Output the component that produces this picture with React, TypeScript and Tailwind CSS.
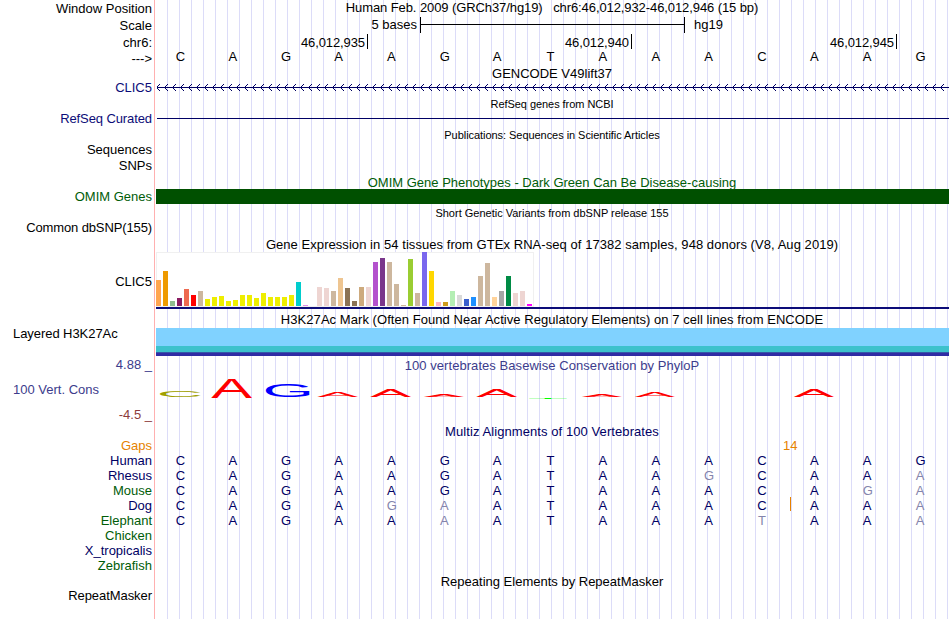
import React from "react";

type Label = { text: string; cls: string };

const INK = "text-black";
const NAVY = "text-[#0c0c78]";
const DEEP = "text-[#000064]";
const GREEN = "text-[#005c08]";
const SLATE = "text-[#3c3c8c]";

const labels: Label[] = [
  { text: "Window Position", cls: `mt-px ${INK}` },
  { text: "Scale", cls: `mt-[2px] ${INK}` },
  { text: "chr6:", cls: `mt-[2px] ${INK}` },
  { text: "--->", cls: `mt-px ${INK}` },
  { text: "CLIC5", cls: `mt-[14px] ${NAVY}` },
  { text: "RefSeq Curated", cls: `mt-[16px] tracking-[-0.1px] ${NAVY}` },
  { text: "Sequences", cls: `mt-[16px] ${INK}` },
  { text: "SNPs", cls: `mt-px ${INK}` },
  { text: "OMIM Genes", cls: `mt-[16px] ${GREEN}` },
  { text: "Common dbSNP(155)", cls: `mt-[16px] tracking-[-0.12px] ${INK}` },
  { text: "CLIC5", cls: `mt-[39px] ${INK}` },
  { text: "Layered H3K27Ac", cls: `mt-[37px] self-start ml-[13px] tracking-[-0.06px] ${INK}` },
  { text: "4.88 _", cls: `mt-[16px] ${SLATE}` },
  { text: "100 Vert. Cons", cls: `mt-[10px] self-start ml-[13px] ${SLATE}` },
  { text: "-4.5 _", cls: "mt-[10px] text-[#8c3c3c]" },
  { text: "Gaps", cls: "mt-[16px] text-[#e68200]" },
  { text: "Human", cls: DEEP },
  { text: "Rhesus", cls: DEEP },
  { text: "Mouse", cls: GREEN },
  { text: "Dog", cls: DEEP },
  { text: "Elephant", cls: GREEN },
  { text: "Chicken", cls: GREEN },
  { text: "X_tropicalis", cls: DEEP },
  { text: "Zebrafish", cls: GREEN },
  { text: "RepeatMasker", cls: `mt-[15px] tracking-[-0.06px] ${INK}` },
];

// Tissue bars: [colour, height in px]
const tissues: [string, number][] = [
  ["#ffa54f", 26], ["#ee9a00", 35], ["#8fbc8f", 5], ["#8b1c62", 8], ["#ee6a50", 17], ["#ff0000", 11],
  ["#cdb79e", 15], ["#eeee00", 7], ["#eeee00", 9], ["#eeee00", 10], ["#eeee00", 5], ["#eeee00", 6],
  ["#eeee00", 11], ["#eeee00", 11], ["#eeee00", 8], ["#eeee00", 13], ["#eeee00", 9], ["#eeee00", 9],
  ["#eeee00", 9], ["#eeee00", 11], ["#00cdcd", 24], ["#e090e8", 1], ["#ffffff", 0], ["#eed5d2", 19],
  ["#eed5d2", 18], ["#cdb79e", 15], ["#eec591", 28], ["#8b7355", 18], ["#8b7355", 5], ["#cdaa7d", 19],
  ["#eed5d2", 19], ["#b452cd", 44], ["#7a378b", 48], ["#cdb79e", 44], ["#cdb79e", 22], ["#cdb79e", 1],
  ["#9acd32", 47], ["#cdb79e", 13], ["#7a67ee", 54], ["#ffd700", 35], ["#ffb6c1", 4], ["#cd9b1d", 4],
  ["#b4eeb4", 15], ["#d9d9d9", 11], ["#3a5fcd", 7], ["#1e90ff", 9], ["#cdb79e", 30], ["#cdb79e", 43],
  ["#ffd39b", 9], ["#a6a6a6", 15], ["#008b45", 30], ["#eed5d2", 13], ["#eed5d2", 15], ["#ff00ff", 2],
];

// Glyph ink boxes per 100px of font size: [left, right, cap height]
const ink: Record<string, [number, number, number]> = {
  A: [0.3, 66.4, 68.8],
  C: [5, 68, 70],
  G: [5, 71, 70],
  T: [2, 59, 68.8],
};

// Conservation letters: letter, colour, left, right, top, bottom within the track
const logo: [string, string, number, number, number, number][] = [
  ["C", "#a0a000", 160, 200.5, 18, 23.8],
  ["A", "#ff0000", 211.5, 252, 6, 25],
  ["G", "#0000ff", 265.7, 309.5, 11, 23.7],
  ["A", "#ff0000", 317.5, 358, 19, 24],
  ["A", "#ff0000", 370.5, 411, 16, 24],
  ["A", "#ff0000", 424, 464, 21.3, 24],
  ["A", "#ff0000", 476.5, 517, 16, 24],
  ["T", "#00ff00", 529, 567, 25, 26],
  ["A", "#ff0000", 582, 622, 22.1, 24],
  ["A", "#ff0000", 635, 675, 19, 24],
  ["A", "#ff0000", 794, 834, 17, 24],
];

const alignments: { seq: string; faded: number[] }[] = [
  { seq: "CAGAAGATAAACAAG", faded: [] },
  { seq: "CAGAAGATAAGCAAA", faded: [10, 14] },
  { seq: "CAGAAGATAAACAGA", faded: [13, 14] },
  { seq: "CAGAGAATAAACAAA", faded: [4, 5, 14] },
  { seq: "CAGAAAATAAATAAA", faded: [5, 11, 14] },
];

function Bases({ seq, faded = [] }: { seq: string; faded?: number[] }) {
  return (
    <div className="-ml-px grid h-[15px] w-[793px] grid-cols-[repeat(15,minmax(0,1fr))]">
      {seq.split("").map((b, i) => (
        <span
          key={i}
          className={`text-center ${b === "A" ? "pr-px" : ""} ${faded.includes(i) ? "text-[#8484ac]" : ""}`}
        >
          {b}
        </span>
      ))}
    </div>
  );
}

function Title({ children, className = "" }: { children: React.ReactNode; className?: string }) {
  return <div className={`-ml-px h-[15px] w-[796px] text-center whitespace-pre ${className}`}>{children}</div>;
}

// Thin line with 7px-tall chevrons pointing to the reverse strand
function Strand() {
  return (
    <svg className="block" width="794" height="9" shapeRendering="crispEdges">
      <path d="M2 4.5H794" stroke="#000064" />
      {Array.from({ length: 99 }, (_, i) => (
        <path
          key={i}
          d={[1, 2, 3].map((k) => `M${1 + i * 8 + k} ${4.5 - k}h1M${1 + i * 8 + k} ${4.5 + k}h1`).join("")}
          stroke="#000064"
        />
      ))}
    </svg>
  );
}

export default function App() {
  return (
    <div className="flex h-[619px] w-[950px] overflow-hidden bg-white font-['Liberation_Sans',Arial,sans-serif] text-[13px] leading-[15px] text-black">
      <div className="flex w-[154px] shrink-0 flex-col items-end pr-[2px] whitespace-pre">
        {labels.map((l, i) => (
          <div key={i} className={`h-[15px] ${l.cls}`}>
            {l.text}
          </div>
        ))}
      </div>
      <div className="w-px shrink-0 bg-[#ffb0b0]" />
      <div className="w-[794px] shrink-0 overflow-hidden [background:linear-gradient(#fff,#fff)_0_0/1px_100%_no-repeat,linear-gradient(90deg,#dcdcf8_1px,transparent_1px)_0_0/12px_100%]">
        <Title className="tracking-[-0.09px]">Human Feb. 2009 (GRCh37/hg19)   chr6:46,012,932-46,012,946 (15 bp)</Title>
        <div className="mt-[2px] flex h-[16px]">
          <span className="w-[262px] text-right">5 bases</span>
          <span className="ml-[3px] flex w-[265px] items-center border-x border-black">
            <span className="-mt-px h-px w-full bg-black" />
          </span>
          <span className="ml-[9px]">hg19</span>
        </div>
        <div className="mt-px flex h-[15px] tracking-[-0.1px]">
          {["46,012,935", "46,012,940", "46,012,945"].map((t, i) => (
            <span
              key={t}
              className={`border-r border-black pt-px pr-[2px] text-right ${i === 0 ? "w-[213px]" : i === 1 ? "w-[264px]" : "w-[265px]"}`}
            >
              {t}
            </span>
          ))}
        </div>
        <Bases seq="CAGAAGATAAACAAG" />
        <Title className="mt-[2px]">GENCODE V49lift37</Title>
        <div className="mt-[2px]">
          <Strand />
        </div>
        <Title className="mt-[5px] text-[11px] tracking-[-0.05px]">RefSeq genes from NCBI</Title>
        <div className="mt-[6px] ml-[2px] h-px bg-[#000064]" />
        <Title className="mt-[9px] text-[11px] tracking-[-0.05px]">Publications: Sequences in Scientific Articles</Title>
        <Title className="mt-[32px] text-[#005c08]">OMIM Gene Phenotypes - Dark Green Can Be Disease-causing</Title>
        <div className="-mt-px ml-px h-[15px] bg-[#005000]" />
        <Title className="mt-[2px] text-[11px]">Short Genetic Variants from dbSNP release 155</Title>
        <Title className="mt-[16px] tracking-[0.055px]">
          Gene Expression in 54 tissues from GTEx RNA-seq of 17382 samples, 948 donors (V8, Aug 2019)
        </Title>
        <div className="ml-px flex h-[55px] w-[378px] items-end gap-[2px] bg-white pb-px shadow-[inset_0_0_0_1px_#f0f0f0]">
          {tissues.map(([color, h], i) => (
            <span key={i} className="w-[5px] shrink-0" style={{ background: color, height: h }} />
          ))}
        </div>
        <div className="ml-px h-[2px] bg-[#0c0c78]" />
        <Title className="mt-[3px] tracking-[0.055px]">
          H3K27Ac Mark (Often Found Near Active Regulatory Elements) on 7 cell lines from ENCODE
        </Title>
        <div className="mt-px ml-px h-[18px] bg-[#80d2ff]" />
        <div className="ml-px h-[6px] bg-[#3cc2cc]" />
        <div className="ml-px h-px bg-[#3458a8]" />
        <div className="ml-px h-[3px] bg-[#302ca4]" />
        <Title className="mt-[2px] tracking-[0.055px] text-[#3c3c8c]">100 vertebrates Basewise Conservation by PhyloP</Title>
        <svg className="block" width="794" height="51" viewBox="155 0 794 51">
          {logo.map(([ch, fill, l, r, t, b], i) => {
            const [il, ir, cap] = ink[ch];
            const sx = (r - l) / (ir - il);
            const sy = (b - t) / cap;
            return (
              <text key={i} transform={`translate(${l - il * sx} ${b}) scale(${sx} ${sy})`} fontSize="100" fill={fill}>
                {ch}
              </text>
            );
          })}
          <path d="M545 25.5h6" stroke="#00ff00" />
        </svg>
        <div className="text-[#000064]">
          <Title className="tracking-[0.08px]">Multiz Alignments of 100 Vertebrates</Title>
          <div className="-mt-px flex h-[15px] pl-[628px] text-[#e68200]">14</div>
          {alignments.map((a, i) => (
            <div key={i} className="relative">
              <Bases seq={a.seq} faded={a.faded} />
              {i === 3 && <span className="absolute -top-px left-[635px] h-[14px] w-px bg-[#e68200]" />}
            </div>
          ))}
        </div>
        <Title className="mt-[46px]">Repeating Elements by RepeatMasker</Title>
      </div>
    </div>
  );
}
